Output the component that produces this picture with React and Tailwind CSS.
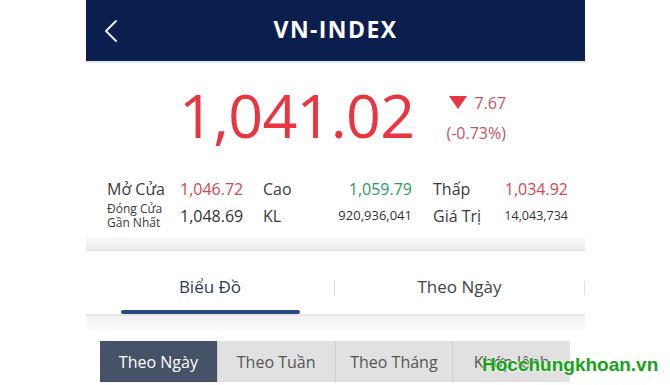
import React from 'react';

const sans = { fontFamily: '"Open Sans", "Noto Sans", sans-serif' };

function StatLabel({ children, className = '' }) {
    return <div className={`text-[16px] text-[#3a3a3a] ${className}`}>{children}</div>;
}

export default function App() {
    const ranges = ['Theo Ngày', 'Theo Tuần', 'Theo Tháng', 'Khớp lệnh'];

    return (
        <div className="w-[670px] h-[385px] bg-white overflow-hidden relative" style={sans}>
            <div className="w-[499px] h-full ml-[86px] flex flex-col bg-white">
                {/* header */}
                <div className="h-[61px] shrink-0 bg-[#0b1f4e] flex items-center relative">
                    <svg className="absolute left-[17px] top-[19px]" width="16" height="24" viewBox="0 0 16 24" fill="none">
                        <path d="M13 2 L3 12 L13 22" stroke="#e8ecf4" strokeWidth="2" strokeLinecap="round" strokeLinejoin="round" />
                    </svg>
                    <div className="w-full text-center text-white text-[23px] font-bold tracking-[1.4px] pb-[2px]">VN-INDEX</div>
                </div>
                <div className="h-[2px] bg-[#e4e8f0]" />

                {/* price */}
                <div className="h-[102px] shrink-0 flex items-start pl-[93px] pt-[21px]">
                    <div className="text-[61px] leading-none text-[#e8353f] tracking-[-0.7px]">1,041.02</div>
                    <div className="ml-[32px] pt-[11px] flex flex-col items-start">
                        <div className="flex items-center">
                            <svg width="18" height="14" viewBox="0 0 18 14" className="ml-[3px]">
                                <path d="M0 0 H18 L9 13 Z" fill="#e8353f" />
                            </svg>
                            <span className="ml-[7px] text-[16px] leading-none text-[#c2555e]">7.67</span>
                        </div>
                        <div className="mt-[14px] text-[16px] leading-none text-[#c2555e]">(-0.73%)</div>
                    </div>
                </div>

                {/* stats */}
                <div className="h-[73px] shrink-0 pl-[21px] pt-[13px]">
                    <div className="flex items-center h-[22px]">
                        <StatLabel className="w-[73px]">Mở Cửa</StatLabel>
                        <div className="w-[83px] text-[16px] text-[#d8464f]">1,046.72</div>
                        <StatLabel className="w-[60px]">Cao</StatLabel>
                        <div className="w-[89px] text-right text-[16px] text-[#2e9a5b]">1,059.79</div>
                        <div className="w-[21px]" />
                        <StatLabel className="w-[70px]">Thấp</StatLabel>
                        <div className="w-[65px] text-right text-[16px] text-[#d8464f]">1,034.92</div>
                    </div>
                    <div className="flex items-center h-[32px]">
                        <div className="w-[73px] text-[12px] leading-[14px] text-[#3a3a3a]">
                            <div>Đóng Cửa</div>
                            <div>Gần Nhất</div>
                        </div>
                        <div className="w-[83px] text-[16px] text-[#333]">1,048.69</div>
                        <StatLabel className="w-[60px]">KL</StatLabel>
                        <div className="w-[89px] text-right text-[13px] text-[#333]">920,936,041</div>
                        <div className="w-[21px]" />
                        <StatLabel className="w-[70px]">Giá Trị</StatLabel>
                        <div className="w-[65px] text-right text-[12.5px] text-[#333]">14,043,734</div>
                    </div>
                </div>

                {/* separator */}
                <div className="h-[13px] shrink-0 bg-gradient-to-b from-[#f7f7f7] to-[#ececec] border-b border-[#e2e2e2]" />

                {/* tabs */}
                <div className="h-[65px] shrink-0 flex relative border-b-[2px] border-[#e6e6e6] pt-[8px]">
                    <div className="w-[248px] flex items-center justify-center text-[17px] text-[#2a3a5e] relative">
                        Biểu Đồ
                        <div className="absolute left-[35px] bottom-[0px] w-[179px] h-[4px] rounded-[2px] bg-[#2c4a7e]" />
                    </div>
                    <div className="w-[1px] h-[14px] bg-[#dcdcdc] self-center mt-[2px]" />
                    <div className="flex-1 flex items-center justify-center text-[17px] text-[#444]">Theo Ngày</div>
                    <div className="w-[1px] h-[14px] bg-[#dcdcdc] self-center mt-[2px]" />
                </div>

                {/* light band */}
                <div className="h-[14px] shrink-0 bg-gradient-to-b from-[#f2f2f2] to-[#fbfbfb]" />

                {/* range buttons */}
                <div className="flex-1 pl-[14px] pt-[11px]">
                    <div className="flex w-[470px] h-[41px]">
                        {ranges.map((r, i) => (
                            <div
                                key={r}
                                className={
                                    i === 0
                                        ? 'flex-1 flex items-center justify-center bg-[#465268] text-white text-[16px]'
                                        : 'flex-1 flex items-center justify-center bg-[#e1e1e1] text-[#555] text-[16px] border-l border-[#cfcfcf]'
                                }
                            >
                                {r}
                            </div>
                        ))}
                    </div>
                </div>
            </div>

            {/* watermark */}
            <div
                className="absolute left-[482px] top-[355px] text-[19px] font-bold leading-none text-[#17a317]"
                style={{ fontFamily: '"Liberation Sans", Arial, sans-serif', textShadow: '0 0 2px #fff, 0 0 2px #fff' }}
            >
                Hocchungkhoan.vn
            </div>
        </div>
    );
}
